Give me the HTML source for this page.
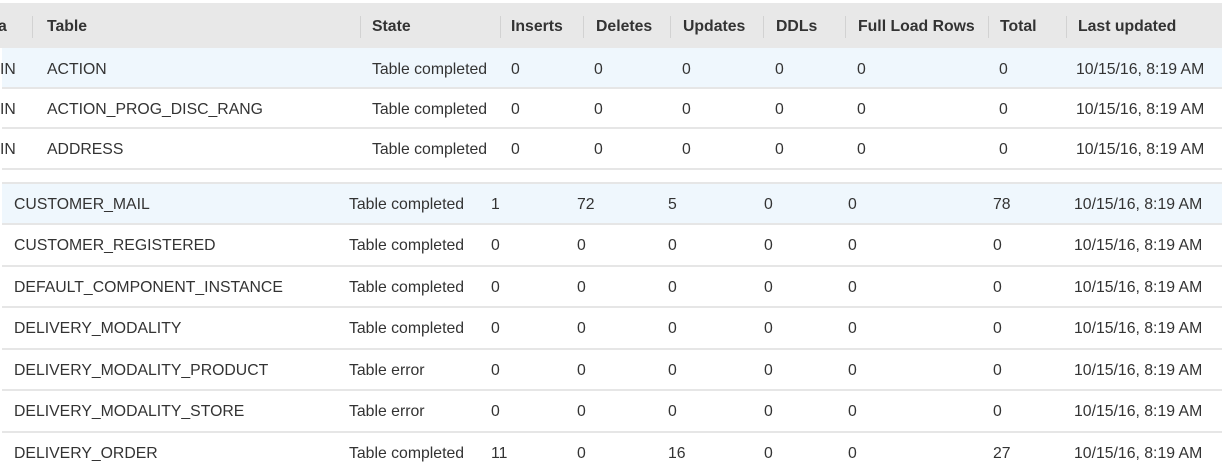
<!DOCTYPE html>
<html><head><meta charset="utf-8"><style>
body{margin:0;width:1222px;height:476px;overflow:hidden;background:#fff;font-family:"Liberation Sans",Arial,sans-serif;font-size:15.8px;color:#333;position:relative}
.r{position:absolute;left:2px;width:1220px;border-bottom:2px solid #e6e6e6;box-sizing:border-box}
.r span{position:absolute;top:1px;white-space:nowrap}
.h{background:#e8e8e8;font-weight:bold;color:#333;border:none}
.sep{position:absolute;top:13px;width:1px;height:22px;background:#d2d2d2}
.b{background:#eff7fd}
</style></head><body>
<div class="r h" style="top:3px;height:45px;line-height:46px;left:0;width:1222px">
<span style="left:-2px">a</span><span style="left:47px">Table</span><span style="left:372px">State</span><span style="left:511px">Inserts</span><span style="left:596px">Deletes</span><span style="left:683px">Updates</span><span style="left:776px">DDLs</span><span style="left:858px">Full Load Rows</span><span style="left:1000px">Total</span><span style="left:1078px">Last updated</span>
<div class="sep" style="left:32px"></div><div class="sep" style="left:360px"></div><div class="sep" style="left:500px"></div><div class="sep" style="left:583px"></div><div class="sep" style="left:670px"></div><div class="sep" style="left:763px"></div><div class="sep" style="left:845px"></div><div class="sep" style="left:988px"></div><div class="sep" style="left:1066px"></div>
</div>
<div class="r b" style="top:48px;height:41px;line-height:42px"><span style="left:-2px">IN</span><span style="left:45px">ACTION</span><span style="left:370px">Table completed</span><span style="left:509px">0</span><span style="left:592px">0</span><span style="left:680px">0</span><span style="left:773px">0</span><span style="left:855px">0</span><span style="left:997px">0</span><span style="left:1074px">10/15/16, 8:19 AM</span></div>
<div class="r" style="top:89px;height:40px;line-height:40px"><span style="left:-2px">IN</span><span style="left:45px">ACTION_PROG_DISC_RANG</span><span style="left:370px">Table completed</span><span style="left:509px">0</span><span style="left:592px">0</span><span style="left:680px">0</span><span style="left:773px">0</span><span style="left:855px">0</span><span style="left:997px">0</span><span style="left:1074px">10/15/16, 8:19 AM</span></div>
<div class="r" style="top:129px;height:41px;line-height:40px"><span style="left:-2px">IN</span><span style="left:45px">ADDRESS</span><span style="left:370px">Table completed</span><span style="left:509px">0</span><span style="left:592px">0</span><span style="left:680px">0</span><span style="left:773px">0</span><span style="left:855px">0</span><span style="left:997px">0</span><span style="left:1074px">10/15/16, 8:19 AM</span></div>
<div style="position:absolute;left:2px;top:182px;width:1220px;height:2px;background:#e6e6e6"></div>
<div class="r b" style="top:184px;height:41px;line-height:40px"><span style="left:12px">CUSTOMER_MAIL</span><span style="left:347px">Table completed</span><span style="left:489px">1</span><span style="left:575px">72</span><span style="left:666px">5</span><span style="left:762px">0</span><span style="left:846px">0</span><span style="left:991px">78</span><span style="left:1072px">10/15/16, 8:19 AM</span></div>
<div class="r" style="top:225px;height:42px;line-height:40px"><span style="left:12px">CUSTOMER_REGISTERED</span><span style="left:347px">Table completed</span><span style="left:489px">0</span><span style="left:575px">0</span><span style="left:666px">0</span><span style="left:762px">0</span><span style="left:846px">0</span><span style="left:991px">0</span><span style="left:1072px">10/15/16, 8:19 AM</span></div>
<div class="r" style="top:267px;height:41px;line-height:40px"><span style="left:12px">DEFAULT_COMPONENT_INSTANCE</span><span style="left:347px">Table completed</span><span style="left:489px">0</span><span style="left:575px">0</span><span style="left:666px">0</span><span style="left:762px">0</span><span style="left:846px">0</span><span style="left:991px">0</span><span style="left:1072px">10/15/16, 8:19 AM</span></div>
<div class="r" style="top:308px;height:42px;line-height:40px"><span style="left:12px">DELIVERY_MODALITY</span><span style="left:347px">Table completed</span><span style="left:489px">0</span><span style="left:575px">0</span><span style="left:666px">0</span><span style="left:762px">0</span><span style="left:846px">0</span><span style="left:991px">0</span><span style="left:1072px">10/15/16, 8:19 AM</span></div>
<div class="r" style="top:350px;height:41px;line-height:40px"><span style="left:12px">DELIVERY_MODALITY_PRODUCT</span><span style="left:347px">Table error</span><span style="left:489px">0</span><span style="left:575px">0</span><span style="left:666px">0</span><span style="left:762px">0</span><span style="left:846px">0</span><span style="left:991px">0</span><span style="left:1072px">10/15/16, 8:19 AM</span></div>
<div class="r" style="top:391px;height:42px;line-height:40px"><span style="left:12px">DELIVERY_MODALITY_STORE</span><span style="left:347px">Table error</span><span style="left:489px">0</span><span style="left:575px">0</span><span style="left:666px">0</span><span style="left:762px">0</span><span style="left:846px">0</span><span style="left:991px">0</span><span style="left:1072px">10/15/16, 8:19 AM</span></div>
<div class="r" style="top:433px;height:43px;line-height:40px;border:none"><span style="left:12px">DELIVERY_ORDER</span><span style="left:347px">Table completed</span><span style="left:489px">11</span><span style="left:575px">0</span><span style="left:666px">16</span><span style="left:762px">0</span><span style="left:846px">0</span><span style="left:991px">27</span><span style="left:1072px">10/15/16, 8:19 AM</span></div>
</body></html>
